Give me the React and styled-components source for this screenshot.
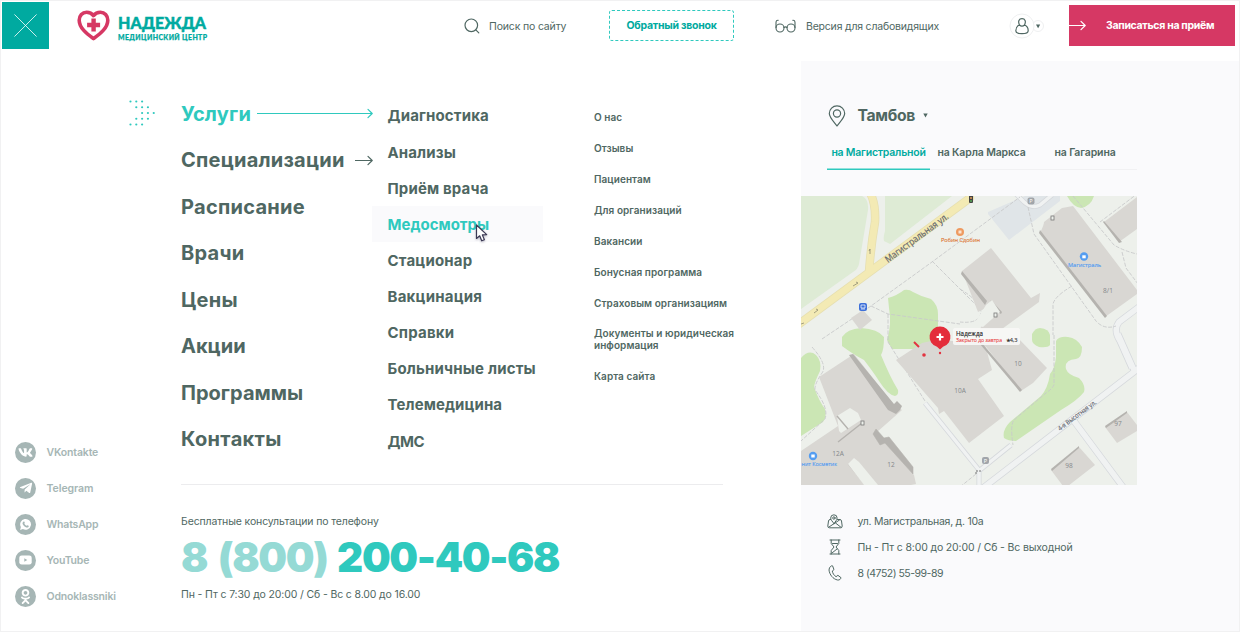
import React from "react";
import styled, { createGlobalStyle } from "styled-components";
import { FaVk, FaTelegramPlane, FaOdnoklassniki } from "react-icons/fa";

const c = {
  ink: "#4f6762",
  teal: "#00aaa0",
  bright: "#2fc9be",
  pale: "#95dad5",
  rose: "#d63864",
  mute: "#a6b6b5",
  panel: "#fafafc",
  line: "#ececee",
};

const Global = createGlobalStyle`
  * { box-sizing: border-box; }
  body { margin: 0; background: #fff; }
  ul { list-style: none; margin: 0; padding: 0; }
  button { font: inherit; border: 0; background: none; padding: 0; margin: 0; }
  svg { display: block; flex: none; }
`;

const Page = styled.div`
  width: 1240px;
  height: 632px;
  overflow: hidden;
  display: flex;
  flex-direction: column;
  border: 1px solid #f1f1f2;
  background: #fff;
  color: ${c.ink};
  font-family: Inter, "Open Sans", sans-serif;
  white-space: nowrap;
`;

const Header = styled.header`
  height: 60px;
  flex: none;
  display: flex;
  align-items: flex-start;
  padding: 1px 4px 0 1px;
`;

const CloseButton = styled.button`
  width: 47px;
  height: 47px;
  display: grid;
  place-items: center;
  background: ${c.teal};
`;

const Logo = styled.div`
  margin: 6px 0 0 27px;
  width: 134px;
`;

const HeaderItem = styled.div`
  height: 48px;
  display: flex;
  align-items: center;
  gap: ${(p) => p.$gap}px;
  margin-left: ${(p) => p.$left}px;
  width: ${(p) => p.$width}px;
  font-size: 10.5px;
  letter-spacing: ${(p) => p.$track || 0}px;
`;

const CallButton = styled.button`
  width: 125px;
  height: 31px;
  margin: 8px 0 0 24px;
`;

const CallFrame = styled.span`
  display: grid;
  place-items: center;
  height: 100%;
  border: 1px dashed ${c.bright};
  border-radius: 3px;
  color: ${c.teal};
  font-size: 10.5px;
  font-weight: 700;
  letter-spacing: -0.24px;
`;

const BookButton = styled.button`
  width: 166px;
  height: 41px;
  margin: 3px 0 0 auto;
  display: flex;
  align-items: center;
  gap: 20px;
  background: ${c.rose};
  color: #fff;
  font-size: 10.5px;
  font-weight: 700;
  letter-spacing: -0.31px;
`;

const Body = styled.div`
  flex: 1;
  display: flex;
`;

const Rail = styled.aside`
  width: 180px;
  padding: 39px 0 16.5px 14px;
  display: flex;
  flex-direction: column;
  justify-content: space-between;
`;

const DotsSlot = styled.div`
  align-self: flex-end;
  margin-right: 25.5px;
`;

const SocialList = styled.ul`
  display: grid;
  grid-auto-rows: 36.1px;
`;

const SocialItem = styled.li`
  display: flex;
  align-items: center;
  gap: 10.5px;
  color: ${c.mute};
  font-size: 10.5px;
  font-weight: 600;
  letter-spacing: ${(p) => p.$track || 0}px;
`;

const SocialBadge = styled.span`
  width: 21px;
  height: 21px;
  border-radius: 50%;
  display: grid;
  place-items: center;
  background: ${c.mute};
  color: #fff;
`;

const Main = styled.main`
  width: 620px;
`;

const Menus = styled.nav`
  height: 363px;
  display: flex;
`;

const MainMenu = styled.ul`
  width: 191px;
  height: 100%;
  padding-top: 29.7px;
`;

const MainLink = styled.li`
  height: 46.5px;
  width: 192px;
  display: flex;
  align-items: center;
  justify-content: space-between;
  color: ${(p) => (p.$active ? c.bright : c.ink)};
  font-size: 20px;
  font-weight: 700;
  letter-spacing: ${(p) => p.$track || 0}px;
`;

const SubMenu = styled.ul`
  width: 171px;
  padding-top: 36.8px;
`;

const SubLink = styled.li`
  height: 36.15px;
  padding-left: 15.5px;
  display: flex;
  align-items: center;
  background: ${(p) => (p.$active ? c.panel : "transparent")};
  color: ${(p) => (p.$active ? c.bright : c.ink)};
  font-size: 15px;
  font-weight: 700;
  letter-spacing: ${(p) => p.$track || 0}px;
`;

const InfoMenu = styled.ul`
  padding: 40px 0 0 51px;
`;

const InfoLink = styled.li`
  height: ${(p) => (p.$tall ? 42 : 31)}px;
  display: flex;
  align-items: center;
  font-size: 10px;
  line-height: 12px;
  font-weight: 600;
  white-space: pre-line;
  letter-spacing: 0.06px;
`;

const Divider = styled.hr`
  width: 542px;
  height: 1px;
  margin: 60px 0 0;
  border: 0;
  background: ${c.line};
`;

const Hotline = styled.section`
  padding-top: 30px;
`;

const Note = styled.p`
  margin: 0;
  font-size: 10.5px;
  line-height: 14px;
  letter-spacing: -0.135px;
`;

const Phone = styled.div`
  height: 59px;
  padding-bottom: 2px;
  display: flex;
  align-items: center;
  gap: 9.5px;
  color: ${c.bright};
  font-size: 40.5px;
  font-weight: 900;
  letter-spacing: -1.35px;
`;

const PhoneCode = styled.span`
  color: ${c.pale};
  word-spacing: 4px;
`;

const Branch = styled.aside`
  flex: 1;
  background: ${c.panel};
`;

const City = styled.div`
  padding: 43px 0 0 27px;
  display: flex;
  align-items: center;
  height: 66px;
  font-size: 15.7px;
  font-weight: 700;
`;

const CityName = styled.span`
  margin: 0 8px 0 11.5px;
  letter-spacing: -0.3px;
`;

const Tabs = styled.div`
  width: 310px;
  height: 43px;
  margin-left: 26px;
  display: grid;
  grid-template-columns: 103px 103px 104px;
  box-shadow: inset 0 -1px #f1f1f3;
`;

const Tab = styled.button`
  height: 43px;
  padding-top: 8px;
  display: flex;
  align-items: center;
  justify-content: center;
  box-shadow: ${(p) => (p.$active ? `inset 0 -1.5px ${c.bright}` : "none")};
  color: ${(p) => (p.$active ? c.teal : c.ink)};
  font-size: 10.5px;
  font-weight: 600;
  letter-spacing: ${(p) => p.$track || 0}px;
`;

const MapFrame = styled.div`
  margin-top: 26px;
  width: 336px;
  height: 289px;
`;

const Contacts = styled.ul`
  padding: 23px 0 0 24.5px;
`;

const Contact = styled.li`
  height: 26px;
  display: grid;
  grid-template-columns: 18px auto;
  justify-content: start;
  justify-items: center;
  align-items: center;
  column-gap: 14px;
  font-size: 10.5px;
  letter-spacing: ${(p) => p.$track || 0}px;
`;

const Pointer = styled.svg`
  position: absolute;
  left: 474px;
  top: 223px;
  filter: drop-shadow(0 1px 1px rgba(60, 58, 85, 0.35));
`;

const Stroke = ({ w, h, box, sw = 1, color = c.ink, children }) => (
  <svg width={w} height={h} viewBox={box || `0 0 ${w} ${h}`} fill="none" stroke={color}
    strokeWidth={sw} strokeLinecap="round" strokeLinejoin="round">{children}</svg>
);

const Arrow = ({ length, color = c.ink }) => (
  <Stroke w={length} h={11} sw={1.2} color={color}>
    <path d={`M.5 5.5H${length - 1}M${length - 5} 1.3l4.2 4.2-4.2 4.2`} />
  </Stroke>
);

const Caret = () => (
  <svg width="5" height="5" viewBox="0 0 5 5" fill={c.ink}><path d="M.3.6h4.400L2.500 4.600z" /></svg>
);

const LogoArt = () => (
  <svg width="134" height="36" viewBox="76 8 134 36">
    <path d="M93.5 38.6C86.8 33.6 79.2 28 79.2 20.2c0-4.6 3.2-8 7.4-8 2.8 0 5.4 1.3 6.9 3.4 1.5-2.1 4.1-3.4 6.9-3.4 4.2 0 7.4 3.4 7.4 8 0 7.800-7.600 13.400-14.300 18.400z"
      fill="none" stroke={c.rose} strokeWidth="3.600" strokeLinejoin="round" />
    <path d="M91.400 18.500h4.400v4.300h4.300v4.400h-4.300v4.200h-4.400v-4.200h-4.300v-4.400h4.300z" fill={c.rose} />
    <text x="118" y="28.700" textLength="88" lengthAdjust="spacingAndGlyphs" fontSize="17" fontWeight="900" fontFamily="Lato, Inter, sans-serif" fill={c.teal} stroke={c.teal} strokeWidth=".5">НАДЕЖДА</text>
    <text x="118" y="39.800" textLength="89" lengthAdjust="spacing" fontSize="6.900" fontWeight="900" fontFamily="Lato, Inter, sans-serif" fill={c.teal} stroke={c.teal} strokeWidth=".25">МЕДИЦИНСКИЙ ЦЕНТР</text>
  </svg>
);

const dotRows = [[1, 7, 13], [7, 13, 19], [13, 19, 25], [7, 13, 19], [1, 7, 13]];
const Dots = () => (
  <svg width="27" height="27" viewBox="0 0 27 27" fill={c.bright}>
    {dotRows.map((row, r) => row.map((x) => <circle key={`${r}-${x}`} cx={x * 0.97 + 0.5} cy={1.5 + r * 5.75} r="1.1" />))}
  </svg>
);

const UserMenu = () => (
  <svg width="36" height="27" viewBox="0 0 36 27" fill="none">
    <circle cx="29" cy="13" r="5.500" fill="#fff" stroke="#eff0f1" />
    <circle cx="13" cy="13" r="12" fill="#fff" stroke="#eff0f1" />
    <path d="M10.500 11.800C8.700 8.500 10 5.700 13 5.700s4.300 2.800 2.500 6.100M10.500 11.800C8 13 6.800 15.300 6.800 17.700c0 2.200 2 3 6.200 3s6.200-.8 6.200-3c0-2.400-1.200-4.700-3.700-5.900M10.500 11.800c1.400 1.800 3.600 1.800 5 0" stroke={c.ink} strokeWidth="1.200" />
    <path d="M27 11.400h4.200l-2.100 3.800z" fill={c.ink} />
  </svg>
);

const WhatsMark = () => (
  <svg width="13" height="13" viewBox="0 0 13 13">
    <path d="M1.100 12l.8-2.900a5.400 5.400 0 1 1 2 2z" fill="#fff" />
    <path d="M4.300 3.700c.5-.4.900-.3 1.100.1l.4 1c.1.400-.5.7-.4 1 .5 1 1.200 1.600 2.100 2 .4.100.6-.7 1-.6l1.100.6c.5.300-.1 1.500-1 1.700-2.300.4-5.600-2.800-5-4.800z" fill={c.mute} />
  </svg>
);

const TubeMark = () => (
  <svg width="13" height="10" viewBox="0 0 13 10">
    <rect x=".3" y=".4" width="12.400" height="9.200" rx="2.400" fill="#fff" />
    <path d="M5.300 3.200v3.600L8.300 5z" fill={c.mute} />
  </svg>
);

const grass = "#cbe6b4";
const roof = "#d9d7d3";
const wall = "#b5b3af";

const Building = ({ d, shade }) => (
  <g>
    <path d={d} fill={roof} />
    {shade && <path d={shade} fill={wall} />}
  </g>
);

const CityMap = () => (
  <svg width="336" height="289" viewBox="801 196 336 289" fontFamily='"Open Sans", "Noto Sans", sans-serif'>
    <rect x="801" y="196" width="336" height="290" fill="#edf0eb" />
    <g fill="#deebd5">
      <path d="M801 196h61q7 3 6 14l-9 54q-1 5-6 8l-52 37z" />
      <path d="M885 196h67l-62 48-6-3q-1-3 1-10z" />
    </g>
    <path d="M988 212l37-16h35v5l-51 39-21-26z" fill="#e0e5e8" />
    <g fill={grass}>
      <path d="M888 298q10-3 16-8 5-1 9 2 9 5 18 7 7 6 7 15v35h-46l-5-9q5-16 2-32z" />
      <path d="M842 337q5-8 19-9 17 1 23 9 0 13-3 18 9 22 17 35 1 5-3 6-7-1-16-15-5-8-15-21-10-5-22-14z" />
      <path d="M801 358q8-9 15-3 6 6 4 16-5 10-6 16 5 14 11 22 2 8-2 13l-22 14z" />
      <path d="M1032 334q3-6 8-6 9 1 10 7v10q-2 3-11 2-7-3-7-7z" />
      <path d="M1056 341q3-5 12-4 9 1 14 10 0 11-6 12-12 1-10 10 2 6 13 9 7 7 5 14-6 8-23 18l-45 31q-8 0-12-3-2-8 6-16l31-26q7-8 9-22 5-6 6-17z" />
      <path d="M1067 196h27q-3 10-13 12-8-1-14-12z" />
    </g>
    <g fill="none" stroke="#d5d8dc" strokeWidth="7">
      <path d="M983 488l156-120M1071 417l52 70M1118 334l16 36M1139 307l-20 15q-6 8 1 19l12 27" />
      <path d="M925 403l54 67v18M980 470l31-25M1016 194l8 8q8 7 16 3l12-10" strokeWidth="5" />
    </g>
    <g fill="none" stroke="#f0f2f2" strokeWidth="5.500">
      <path d="M983 488l156-120M1071 417l52 70M1118 334l16 36M1139 307l-20 15q-6 8 1 19l12 27" />
      <path d="M925 403l54 67v18M980 470l31-25M1016 194l8 8q8 7 16 3l12-10" strokeWidth="3.500" />
    </g>
    <g fill="none" strokeLinecap="round">
      <path d="M799 324l171-126M869 272q2-27 6-50 1-20-6-31" stroke="#e6dfb1" strokeWidth="8.500" />
      <path d="M799 324l171-126M869 272q2-27 6-50 1-20-6-31" stroke="#f3eab4" strokeWidth="7" />
    </g>
    <g fill="none" stroke="#c8cacb" strokeWidth=".9" strokeDasharray="4 1.500">
      <path d="M822 339l49-33 61-44 88-65M932 261l48 48M871 306l17 8 72 10M888 314v28l37 59M812 347q16 18 10 26-8 12-7 17 14 18 10 29l-24 22M1028 207l6 27 62 87q8 9 20 5M1073 196l41 49q10 6 23 9M1054 335v50q-2 4-8 8l-32 27q-4 5-1 25M1072 286q-20 12-19 20v29M801 487l30-20M960 289q20 12 21 23-1 12-21 10M960 487l16-13M1122 252l4 16 12 16M1100 222l37-28" />
    </g>
    <Building d="M819 377l35-23 40 51 8 5-25 22 10 10 27 33 2 9-5 1h-110v-34l37-25z" shade="M849 355l4-1 41 50 3-3 5 5-2 4-4 4-8-4z" />
    <path d="M837 416l13-8 8 5 3 7-20 13-2-2z" fill="#edf0eb" />
    <path d="M837 416l11 13M838 442l24-19" stroke="#b5b3af" strokeWidth="1.400" />
    <path d="M848 464l17 21M873 434l3-5 8 9 5-1 24 30v7l-28-31-5 2z" fill={wall} stroke={wall} strokeWidth=".6" />
    <path d="M848 464l6-6 5 4 19 23h-14z" fill="#edf0eb" />
    <Building d="M896 360l26-17 18-4 12 2h32l8 29-14 9 26 37-35 27-25-32-5 3-1-6z" />
    <Building d="M962 271l29-23 40 50 9-5-1 9-37 27h-22l14-25-16 8z" shade="M962 271l25 30-2 4-24-31zM991 300l11 12-1 2-7-4-4-7z" />
    <path d="M986 305l6-5 8 12-17 15-9-3z" fill="#edf0eb" />
    <Building d="M1040 233q4-8 4-11l18-14 11-2 64 84v4l-32 23z" shade="M1040 230l67 86-2 2-66-85z" />
    <Building d="M1104 222l33-25v32l-18 13z" shade="M1104 221l18 21-3 1-16-21z" />
    <Building d="M983 343l35-5 29 30-14 15-12 8z" shade="M981 342l41 48-2 2-40-48z" />
    <Building d="M851 318l12-8 9 10-12 10z" />
    <Building d="M1105 427l22-15 10 13v6l-20 12z" shade="M1105 426l22-15v2l-21 15z" />
    <Building d="M1051 470l28-23 16 18-27 21h-5z" shade="M1051 469l28-23v2l-27 23z" />
    <g fontSize="6.500" fill="#85878a" textAnchor="middle">
      <text x="1108" y="293">8/1</text><text x="960" y="393">10А</text>
      <text x="1018" y="366">10</text><text x="838" y="456">12А</text>
      <text x="891" y="467">12</text><text x="1118" y="426">97</text><text x="1069" y="468">98</text>
    </g>
    <g fill="#61646d">
      <text transform="translate(888 263) rotate(-36.500)" fontSize="9.300" textLength="76" lengthAdjust="spacingAndGlyphs" stroke="#61646d" strokeWidth=".2">Магистральная ул.</text>
      <text transform="translate(1060 431) rotate(-37)" fontSize="6.500" textLength="46" lengthAdjust="spacingAndGlyphs" stroke="#61646d" strokeWidth=".15">4-я Высотная ул.</text>
    </g>
    <g stroke="#8e8b72" strokeWidth=".8" fill="none">
      <path d="M853 286l5-3-2-1M814 313l4-3-2-1M870 254v-5l-1 2M801 324l3-1" />
    </g>
    <g fill="#edf0eb" stroke="#777" strokeWidth=".8">
      <rect x="1051" y="216" width="3" height="4" /><rect x="994" y="313" width="3" height="4" /><rect x="861" y="421" width="3" height="4" />
    </g>
    <rect x="859" y="303" width="8" height="8" rx="2" fill="#3e70d9" />
    <path d="M861 305h4v3h-4zM861 309h4" stroke="#fff" strokeWidth=".7" fill="none" />
    <rect x="969" y="195" width="4" height="8" rx="1" fill="#444" />
    <circle cx="971" cy="198" r="1" fill="#d95" /><circle cx="971" cy="201" r="1" fill="#5a5" />
    {[[1031, 201], [985.5, 460.5]].map(([x, y]) => (
      <g key={x}>
        <rect x={x - 3.5} y={y - 3.5} width="7" height="7" rx="2" fill="#a1a5aa" />
        <text x={x} y={y + 2} fontSize="5.500" fill="#fff" textAnchor="middle">P</text>
      </g>
    ))}
    <circle cx="960" cy="232" r="4" fill="#ee9a60" /><rect x="958.500" y="230.500" width="3" height="3" fill="#fbe3d0" />
    <text x="941" y="242" fontSize="5.800" fill="#dd7b3b" stroke="#dd7b3b" strokeWidth=".15" textLength="39" lengthAdjust="spacingAndGlyphs">Робин Сдобин</text>
    <circle cx="1084" cy="256.500" r="4.200" fill="#559df0" /><rect x="1082.300" y="255.300" width="3.400" height="3" fill="#fff" />
    <text x="1068" y="266.500" fontSize="5.700" fill="#559df0" stroke="#559df0" strokeWidth=".15" textLength="33" lengthAdjust="spacingAndGlyphs">Магистраль</text>
    <circle cx="813" cy="456" r="4.200" fill="#559df0" /><rect x="811.300" y="454.500" width="3.400" height="3" fill="#fff" />
    <text x="801.500" y="466" fontSize="5.500" fill="#559df0" stroke="#559df0" strokeWidth=".15" textLength="35.500" lengthAdjust="spacingAndGlyphs">нит Косметик</text>
    <path d="M976 474v-3h5" fill="none" stroke="#777" strokeDasharray="2 1" />
    <path d="M914 342l5 5" stroke="#e33440" strokeWidth="2" />
    <circle cx="924" cy="355" r="1.800" fill="#e33440" /><circle cx="940" cy="353" r="1.200" fill="#e33440" />
    <rect x="953" y="328" width="67" height="17" rx="2" fill="#f7f7f6" fillOpacity=".9" />
    <text x="956" y="335.500" fontSize="6.200" fill="#222" stroke="#222" strokeWidth=".15" textLength="27">Надежда</text>
    <text x="956" y="342.300" fontSize="5.700" fill="#ea4a4a" stroke="#ea4a4a" strokeWidth=".12" textLength="46" lengthAdjust="spacingAndGlyphs">Закрыто до завтра</text>
    <text x="1005.500" y="342.300" fontSize="5.300" fill="#333" stroke="#333" strokeWidth=".12" textLength="12" lengthAdjust="spacingAndGlyphs">★4,3</text>
    <path d="M940 326.500a10.300 10.300 0 0 1 3 20.200l-3 2.800-3-2.800a10.300 10.300 0 0 1 3-20.200z" fill="#e42d3b" />
    <path d="M940 333.500v7M936.500 337h7" stroke="#fff" strokeWidth="2.200" />
  </svg>
);

const mainLinks = [
  { text: "Услуги", arrow: 116, active: true, track: 0.2 },
  { text: "Специализации", arrow: 18, track: 0.22 },
  { text: "Расписание", track: 0.28 },
  { text: "Врачи", track: 0.25 },
  { text: "Цены", track: 0.25 },
  { text: "Акции" },
  { text: "Программы", track: 0.02 },
  { text: "Контакты", track: 0.35 },
];
const subLinks = [
  ["Диагностика", 0.14], ["Анализы", 0.12], ["Приём врача", 0.15], ["Медосмотры", 0], ["Стационар", 0.2],
  ["Вакцинация", 0.23], ["Справки", 0.2], ["Больничные листы", 0.18], ["Телемедицина", 0.1], ["ДМС", -0.5],
];
const infoLinks = ["О нас", "Отзывы", "Пациентам", "Для организаций", "Вакансии", "Бонусная программа", "Страховым организациям", "Документы и юридическая\nинформация", "Карта сайта"];
const socials = [
  ["VKontakte", <FaVk size={15} />, -0.15], ["Telegram", <FaTelegramPlane size={14} />, -0.05], ["WhatsApp", <WhatsMark />, -0.18],
  ["YouTube", <TubeMark />, -0.2], ["Odnoklassniki", <FaOdnoklassniki size={15} />, -0.18],
];

export default function App() {
  return (
    <Page>
      <Global />
      <Header>
        <CloseButton aria-label="Закрыть">
          <Stroke w={23} h={23} color="#fff" sw={0.8}><path d="M.7.7l21.600 21.600M22.300.7L.7 22.300" /></Stroke>
        </CloseButton>
        <Logo><LogoArt /></Logo>
        <HeaderItem $left={254} $gap={9} $width={121} $track={-0.16}>
          <Stroke w={16} h={16} sw={1.2}><circle cx="7.300" cy="7.300" r="6.300" /><path d="M11.800 11.800l3 3" /></Stroke>
          Поиск по сайту
        </HeaderItem>
        <CallButton><CallFrame>Обратный звонок</CallFrame></CallButton>
        <HeaderItem $left={41} $gap={10} $width={195} $track={-0.2}>
          <Stroke w={21} h={14} sw={1.1}>
            <circle cx="5" cy="9" r="4" /><circle cx="16" cy="9" r="4" />
            <path d="M9 8.500q1.500-1.400 3 0M1 8.500V3.500Q1.200 1 3.200 1.300M20 8.500V3.500Q19.800 1 17.800 1.300" />
          </Stroke>
          Версия для слабовидящих
        </HeaderItem>
        <HeaderItem $left={38.5} $gap={0} $width={36}><UserMenu /></HeaderItem>
        <BookButton><Arrow length={17} color="#fff" />Записаться на приём</BookButton>
      </Header>
      <Body>
        <Rail>
          <DotsSlot><Dots /></DotsSlot>
          <SocialList>
            {socials.map(([name, mark, track]) => (
              <SocialItem key={name} $track={track}><SocialBadge>{mark}</SocialBadge>{name}</SocialItem>
            ))}
          </SocialList>
        </Rail>
        <Main>
          <Menus>
            <MainMenu>
              {mainLinks.map((l) => (
                <MainLink key={l.text} $active={l.active} $track={l.track}>
                  {l.text}
                  {l.arrow && <Arrow length={l.arrow} color={l.active ? c.bright : c.ink} />}
                </MainLink>
              ))}
            </MainMenu>
            <SubMenu>
              {subLinks.map(([t, track]) => <SubLink key={t} $active={t === "Медосмотры"} $track={track}>{t}</SubLink>)}
            </SubMenu>
            <InfoMenu>
              {infoLinks.map((t) => <InfoLink key={t} $tall={t.includes("\n")}>{t}</InfoLink>)}
            </InfoMenu>
          </Menus>
          <Divider />
          <Hotline>
            <Note>Бесплатные консультации по телефону</Note>
            <Phone><PhoneCode>8 (800)</PhoneCode>200-40-68</Phone>
            <Note>Пн - Пт с 7:30 до 20:00 / Сб - Вс с 8.00 до 16.00</Note>
          </Hotline>
        </Main>
        <Branch>
          <City>
            <Stroke w={18} h={22} sw={1.2}><path d="M9 21C6.500 17.500 1.300 12.500 1.300 8.500a7.700 7.700 0 0 1 15.400 0C16.700 12.500 11.500 17.500 9 21z" /><circle cx="9" cy="8.500" r="3.600" /></Stroke>
            <CityName>Тамбов</CityName><Caret />
          </City>
          <Tabs>
            <Tab $active $track={-0.22}>на Магистральной</Tab><Tab $track={-0.14}>на Карла Маркса</Tab><Tab $track={-0.12}>на Гагарина</Tab>
          </Tabs>
          <MapFrame><CityMap /></MapFrame>
          <Contacts>
            <Contact $track={-0.26}>
              <Stroke w={16} h={15} sw={1}>
                <path d="M3.500 5.500H3Q1.800 5.500 1.500 7L.8 12q0 1.800 1.600 1.800h11.200q1.600 0 1.600-1.800l-.7-5q-.3-1.500-1.500-1.500h-2.500M2 13l10.500-7M8.500 9l5.500 4.300M7 9.500C5.500 7.500 3.700 6 3.700 4a3.200 3.200 0 0 1 6.400 0c0 2-1.700 3.500-3.100 5.500z" /><circle cx="6.900" cy="4" r="1.200" />
              </Stroke>
              ул. Магистральная, д. 10а
            </Contact>
            <Contact $track={-0.15}>
              <Stroke w={12} h={16} sw={1}>
                <path d="M1 1h10M1 15h10M2.200 1v3.500L5 8l-2.800 3.500V15M9.800 1v3.500L7 8l2.800 3.500V15M3.500 4.500h5M3 14l5-4" />
              </Stroke>
              Пн - Пт с 8:00 до 20:00 / Сб - Вс выходной
            </Contact>
            <Contact $track={-0.5}>
              <Stroke w={14} h={16} sw={1}>
                <path d="M3.200 1Q.8 2.200 1 5c.6 4.800 4 9 8.500 10 2 .3 3.200-.8 3.500-2.300L9.900 10.300l-1.800 1.400C5.800 10.300 4.700 8.300 4.300 6L6 4.600 4.700 1.200z" />
              </Stroke>
              8 (4752) 55-99-89
            </Contact>
          </Contacts>
        </Branch>
      </Body>
      <Pointer width="15" height="21" viewBox="0 0 15 21">
        <path d="M2.500 2v13.500l3.200-2.700 2 5 2.700-1.100-2-4.800 4.300-.3z" fill="#fff" stroke="#3c3a55" strokeWidth="1.200" strokeLinejoin="round" />
      </Pointer>
    </Page>
  );
}
